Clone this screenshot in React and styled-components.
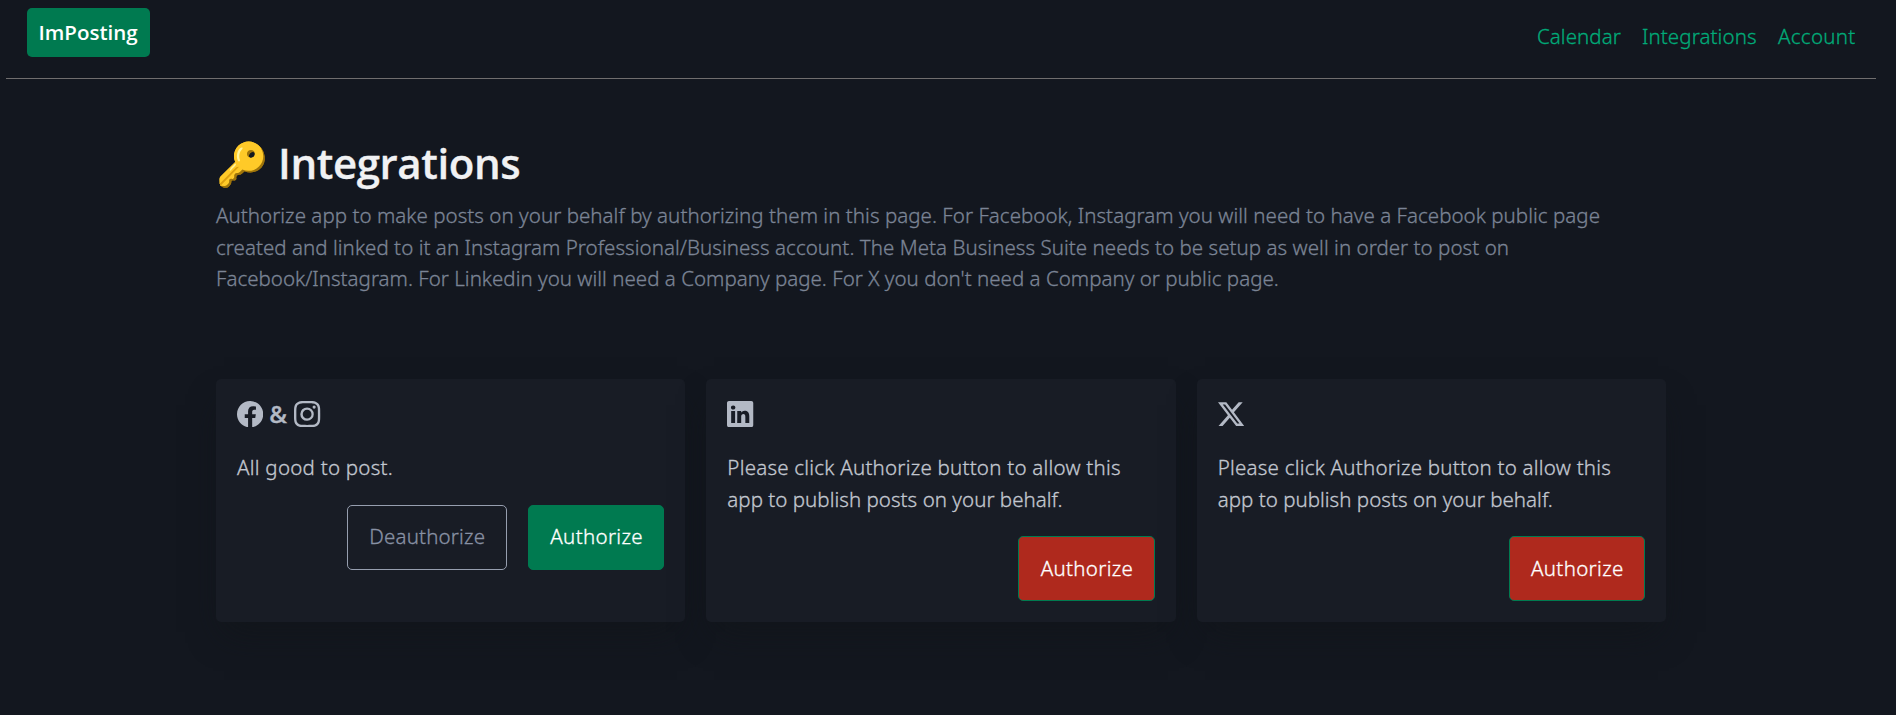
import React from 'react';
import styled, { createGlobalStyle, css } from 'styled-components';
import { BsFacebook, BsInstagram, BsLinkedin, BsTwitterX } from 'react-icons/bs';

const GlobalStyle = createGlobalStyle`
  *, *::before, *::after { box-sizing: border-box; }
  html { background: #13171f; }
  body {
    min-height: 100vh;
    margin: 0;
    padding: 0 20px 0 6px;
    background: #13171f;
    color: #c2c7d0;
    font: 300 20.5px/31.5px "Noto Sans", "Open Sans", sans-serif;
    -webkit-text-stroke: 0.3px currentColor;
  }
  h1, h2, p, ul { margin: 0; padding: 0; font-weight: inherit; }
`;

const Header = styled.header`
  display: flex;
  justify-content: space-between;
  align-items: flex-start;
  height: 71px;
  margin-top: 8px;
  padding: 0 20px 0 21px;
  border-bottom: 1px solid #706e6e;
`;

const Brand = styled.a`
  width: 123px;
  height: 49px;
  padding: 9px 0 0 11.5px;
  border-radius: 5px;
  background: #007a50;
  color: #fff;
  font-family: "Open Sans", sans-serif;
  font-weight: 600;
  -webkit-text-stroke: 0;
  white-space: nowrap;
`;

const NavList = styled.ul`
  display: flex;
  gap: 21px;
  padding-top: 13px;
  list-style: none;
`;

const NavLink = styled.a`
  display: block;
  width: ${(p) => p.$width}px;
  color: #01aa78;
  letter-spacing: ${(p) => p.$track}px;
  white-space: nowrap;
`;

const Main = styled.main`
  width: 1450px;
  margin: 0 auto;
  padding-top: 60px;
`;

const Title = styled.h1`
  display: flex;
  gap: 11px;
  height: 47px;
  color: #f0f1f3;
  font: 600 42px/47px "Open Sans", "Noto Sans", sans-serif;
  letter-spacing: -0.4px;
`;

const KeyMark = styled.span`
  width: 51px;
  letter-spacing: 0;
  white-space: nowrap;
`;

const Intro = styled.p`
  margin-top: 14px;
  color: #7b8495;
`;

const Line = styled.span`
  display: block;
  letter-spacing: ${(p) => p.$track}px;
  white-space: nowrap;
`;

const CardGrid = styled.section`
  display: grid;
  grid-template-columns: repeat(3, 1fr);
  gap: 21px;
  margin-top: 84.5px;
`;

const Card = styled.article`
  height: 242.75px;
  padding: 21px;
  border-radius: 5px;
  background: #181c25;
  box-shadow: 0 18px 32px -8px rgba(17, 20, 24, 0.6);
`;

const CardHeading = styled.h2`
  display: flex;
  align-items: center;
  gap: 7px;
  height: 28px;
  margin-bottom: 23.1px;
  color: #b3b9c5;
  font: 600 24px/28px "Open Sans", sans-serif;

  svg { width: 26.25px; height: 26.25px; }
`;

const Ampersand = styled.span`
  width: 17px;
  margin-left: -1px;
  margin-right: 1px;
`;

const CardText = styled.p`
  height: ${(p) => p.$rows * 31.5}px;
  line-height: 32px;
`;

const Actions = styled.div`
  display: flex;
  justify-content: flex-end;
  gap: 21px;
  margin-top: 22.1px;
`;

const variants = {
  primary: css`border-color: #007a50; background: #007a50; color: #fff;`,
  danger: css`border-color: #007a50; background: #af291d; color: #fff;`,
  outline: css`border-color: #969eaf; background: transparent; color: #8891a4;`,
};

const Button = styled.button`
  width: ${(p) => (p.$variant === 'outline' ? 160 : 136.5)}px;
  height: 65px;
  padding: ${(p) => (p.$variant === 'danger' ? '1px 0 0' : '0 0 1px')} 21.5px;
  border: 1px solid;
  border-radius: 5px;
  font: inherit;
  text-align: left;
  letter-spacing: ${(p) => (p.$variant === 'outline' ? 0.16 : 0.33)}px;
  white-space: nowrap;
  ${(p) => variants[p.$variant]}
`;

const links = [
  { label: 'Calendar', width: 84, track: 0.05 },
  { label: 'Integrations', width: 115, track: 0.1 },
  { label: 'Account', width: 78, track: 0.3 },
];

const intro = [
  ['Authorize app to make posts on your behalf by authorizing them in this page. For Facebook, Instagram you will need to have a Facebook public page', 0.04],
  ['created and linked to it an Instagram Professional/Business account. The Meta Business Suite needs to be setup as well in order to post on', 0.045],
  ["Facebook/Instagram. For Linkedin you will need a Company page. For X you don't need a Company or public page.", 0.02],
];

const pending = [
  ['Please click Authorize button to allow this', 0.23],
  ['app to publish posts on your behalf.', 0.03],
];

const Lines = ({ items }) => items.map(([text, track]) => (
  <Line key={text} $track={track}>{text} </Line>
));

export default function App() {
  return (
    <>
      <GlobalStyle />
      <Header>
        <Brand>ImPosting</Brand>
        <nav>
          <NavList>
            {links.map((l) => (
              <li key={l.label}><NavLink $width={l.width} $track={l.track}>{l.label}</NavLink></li>
            ))}
          </NavList>
        </nav>
      </Header>
      <Main>
        <Title><KeyMark>🔑</KeyMark><span>Integrations</span></Title>
        <Intro><Lines items={intro} /></Intro>
        <CardGrid>
          <Card>
            <CardHeading><BsFacebook /><Ampersand>&amp;</Ampersand><BsInstagram /></CardHeading>
            <CardText $rows={1}><Line $track={0.25}>All good to post.</Line></CardText>
            <Actions>
              <Button $variant="outline">Deauthorize</Button>
              <Button $variant="primary">Authorize</Button>
            </Actions>
          </Card>
          {[BsLinkedin, BsTwitterX].map((Icon, i) => (
            <Card key={i}>
              <CardHeading><Icon /></CardHeading>
              <CardText $rows={2}><Lines items={pending} /></CardText>
              <Actions><Button $variant="danger">Authorize</Button></Actions>
            </Card>
          ))}
        </CardGrid>
      </Main>
    </>
  );
}
